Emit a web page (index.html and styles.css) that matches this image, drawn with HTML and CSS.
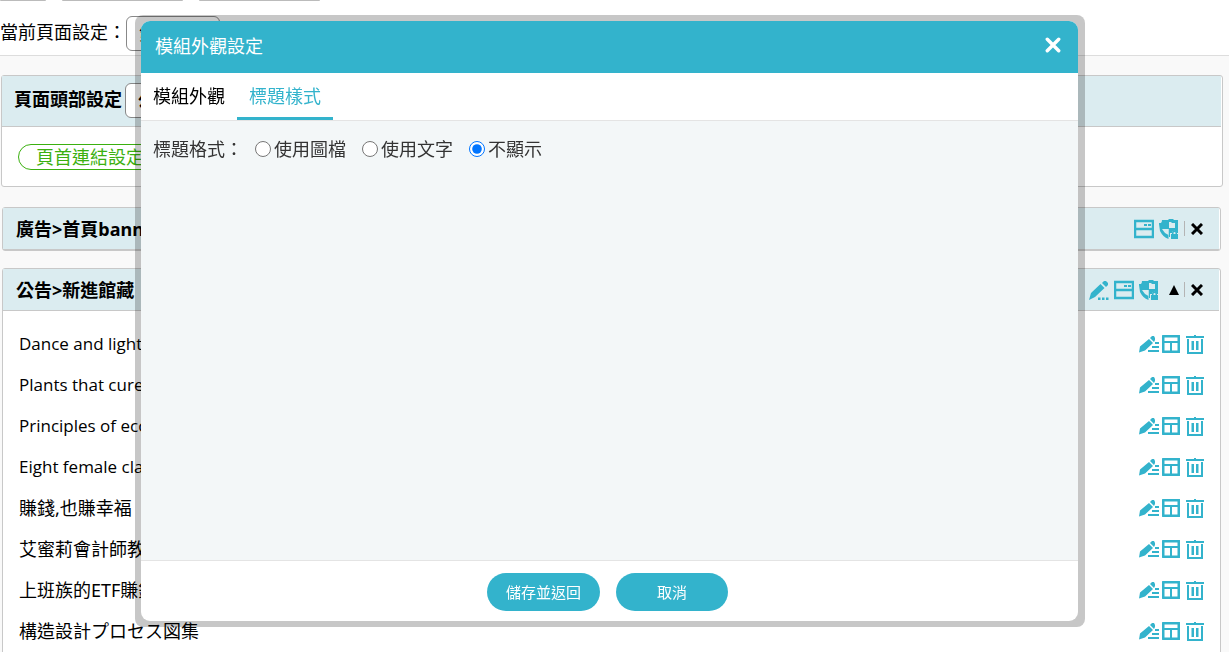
FILE: index.html
```html
<!DOCTYPE html>
<html lang="zh-Hant">
<head>
<meta charset="utf-8">
<title>模組外觀設定</title>
<link rel="stylesheet" href="styles.css">
</head>
<body>
<svg class="sprite" aria-hidden="true">
  <symbol id="i-window" viewBox="0 0 20 20"><path fill="none" stroke="currentColor" stroke-width="2.500" d="M1 2h18v16H1zM1 10h18"/><path fill="currentColor" d="M10 5h3v2h-3zM14 5h3v2h-3z"/></symbol>
  <symbol id="i-shield" viewBox="0 0 20 20"><path fill="currentColor" d="M3 1h6l1-1h4l1 1h4v9h-9.500V20q-3-1-5-3T1 12L0 5V4h2q1-1 1-3z"/><path class="shield-gap" d="M10 3h2l1 1h3v5h-6zM3 10h6.500v6Q5 14 3 10z"/><path fill="currentColor" d="M10 10h9v4h-1q-2-4-5-1v1h-2v4h-1z"/><path fill="currentColor" fill-rule="evenodd" d="M12 15h1v-1a2.500 2.500 0 0 1 5 0v1h1v5h-7zm2.500 0h2v-1a1 1 0 0 0-2 0z"/></symbol>
  <symbol id="i-pen" viewBox="0 0 20 20"><path fill="currentColor" d="M0 20l2-7L11.500 4l4 4L6 17zM13 3l2-2h2l2 2v2l-2 2zM9 17.500h2.500V20H9zM13 17.500h2.500V20H13zM17 17.500h2.500V20H17z"/></symbol>
  <symbol id="i-edit" viewBox="0 0 20 18"><path fill="currentColor" d="M0 17.500l1-6 9-7.500 4 4-8 7.500zM11 3l2-2h2l1 2v2l-1 2zM16 7h4v2h-4zM13 11h7v2h-7zM9 15h11v2H9z"/></symbol>
  <symbol id="i-layout" viewBox="0 0 18 18"><rect x="1" y="1" width="16" height="16" rx="1" fill="none" stroke="currentColor" stroke-width="3"/><path fill="none" stroke="currentColor" stroke-width="2" d="M1 7h16M9 7v10"/></symbol>
  <symbol id="i-trash" viewBox="0 0 18 20"><path fill="currentColor" d="M0 2h8V1h2v1h8v2H0zM1 5h2v13h12V5h2v15H1zM5.500 7H8v9H5.500zM10 7h2.500v9H10z"/></symbol>
</svg>

<div class="page">
  <header class="top">
    <div class="strip"><span class="stub stub-short"></span><span class="stub"></span><span class="stub"></span></div>
    <div class="page-pick"><label class="pick-label" for="pg">當前頁面設定：</label><select id="pg" class="pick"><option>第一頁</option></select></div>
  </header>
  <main class="content">
    <section class="panel panel-wide">
      <div class="head head-tall"><label class="pick-label" for="hd">頁面頭部設定</label><select id="hd" class="pick"><option>公版</option></select></div>
      <div class="links"><a class="pill" href="#">頁首連結設定</a></div>
    </section>
    <section class="panel">
      <div class="head"><h2 class="name">廣告&gt;首頁banner</h2>
        <div class="tools"><button class="tool" aria-label="版面"><svg class="ico"><use href="#i-window"/></svg></button><button class="tool" aria-label="權限"><svg class="ico"><use href="#i-shield"/></svg></button><button class="tool close-x" aria-label="移除"><svg class="cross" viewBox="0 0 12 12"><path d="M1 1l10 10M11 1L1 11"/></svg></button></div>
      </div>
    </section>
    <section class="panel">
      <div class="head"><h2 class="name">公告&gt;新進館藏</h2>
        <div class="tools"><button class="tool" aria-label="編輯"><svg class="ico"><use href="#i-pen"/></svg></button><button class="tool" aria-label="版面"><svg class="ico"><use href="#i-window"/></svg></button><button class="tool" aria-label="權限"><svg class="ico"><use href="#i-shield"/></svg></button><button class="tool up" aria-label="上移"><svg class="tri" viewBox="0 0 10 10"><path d="M5 0l5 10H0z"/></svg></button><button class="tool close-x" aria-label="移除"><svg class="cross" viewBox="0 0 12 12"><path d="M1 1l10 10M11 1L1 11"/></svg></button></div>
      </div>
      <ul class="list" id="list"></ul>
    </section>
  </main>
</div>

<div class="frame" role="dialog" aria-labelledby="dlg">
  <div class="dialog">
    <div class="bar"><h1 class="title" id="dlg">模組外觀設定</h1><button class="close" aria-label="關閉"><svg class="close-mark" viewBox="0 0 14 14"><path d="M2 2l10 10M12 2L2 12"/></svg></button></div>
    <nav class="tabs"><a class="tab" href="#">模組外觀</a><a class="tab tab-on" href="#">標題樣式</a></nav>
    <div class="body">
      <fieldset class="field"><legend class="legend">標題格式：</legend>
        <label class="opt"><input class="radio" type="radio" name="fmt">使用圖檔</label>
        <label class="opt"><input class="radio" type="radio" name="fmt">使用文字</label>
        <label class="opt"><input class="radio" type="radio" name="fmt" checked>不顯示</label>
      </fieldset>
    </div>
    <div class="foot"><button class="btn">儲存並返回</button><button class="btn">取消</button></div>
  </div>
</div>
<script src="list.js"></script>
</body>
</html>
```
FILE: list.js
```js
const titles = [
  "Dance and light", "Plants that cure", "Principles of economics", "Eight female classics",
  "賺錢,也賺幸福", "艾蜜莉會計師教你", "上班族的ETF賺錢術", "構造設計プロセス図集"
];
const icons = [["edit", "編輯"], ["layout", "版面"], ["trash", "刪除"]];
const isLatin = t => /^[\x20-\x7e]+$/.test(t);
document.getElementById("list").innerHTML = titles.map(t =>
  `<li class="row"><span class="${isLatin(t) ? "row-latin" : "row-name"}">${t}</span><span class="acts">${icons.map(([i, l]) =>
    `<button class="tool" aria-label="${l}"><svg class="ico-${i}"><use href="#i-${i}"/></svg></button>`).join("")}</span></li>`
).join("");
```
FILE: styles.css
```css
* { box-sizing: border-box; }
body {
  margin: 0;
  color: #000;
  background: #f9f9f9;
  font: 18px/24px "Noto Sans", "Noto Sans CJK TC", "Noto Sans CJK JP", sans-serif;
}
button, select, input { font: inherit; }
.sprite { position: absolute; width: 0; height: 0; }
.page { height: 100vh; overflow: hidden; }
.top { background: #fff; border-bottom: 1px solid #ddd; }
.strip { display: flex; gap: 16px; height: 1px; }
.stub { width: 121px; background: #bbb; border-radius: 0 0 8px 8px; }
.stub-short { width: 46px; }
.page-pick { display: flex; align-items: center; height: 54px; padding-top: 11px; }
.pick-label { padding-bottom: 3px; }
.pick {
  appearance: none;
  width: 94px;
  height: 35px;
  padding: 0 12px;
  border: 1px solid #888;
  border-radius: 6px;
  background: #fff;
  color: #000;
  font-size: 15px;
}
.content { padding: 19px 8px 0 2px; }
.panel {
  margin-bottom: 17px;
  border: 1px solid #c8c8c8;
  border-radius: 3px;
  background: #fff;
}
.panel-wide { margin: 0 -2px 20px -1px; }
.head {
  display: flex;
  align-items: center;
  height: 42px;
  margin-right: 1px;
  padding: 0 16px 0 13px;
  border-bottom: 1px solid #c8c8c8;
  background: #dbecf0;
  font-weight: 700;
}
.head-tall { height: 51px; gap: 3px; padding: 0 16px 2px 12px; }
.name { margin: 0; font-size: 18px; line-height: 24px; }
.links { padding: 17px 16px 16px; }
.pill {
  display: inline-flex;
  align-items: center;
  height: 26px;
  padding: 0 17px;
  border: 1px solid #3bb010;
  border-radius: 13px;
  color: #3bb010;
  text-decoration: none;
}
.tools { display: flex; align-items: center; gap: 5px; margin-left: auto; }
.tool { display: flex; padding: 0; border: 0; background: none; color: #33b3cc; }
.ico { width: 20px; height: 20px; }
.shield-gap { fill: #dbecf0; }
.up { margin-left: 5px; }
.tri { width: 10px; height: 10px; }
.close-x { height: 15px; align-items: center; padding-left: 6px; border-left: 1px solid #b4b4b4; }
.cross { width: 12px; height: 12px; fill: none; stroke: #000; stroke-width: 3; }
.list { margin: 0; padding: 13px 16px 16px; list-style: none; }
.row { display: flex; align-items: center; height: 41px; padding-bottom: 1px; }
.row-latin { font-family: "Open Sans", sans-serif; font-size: 17px; }
.acts { display: flex; align-items: center; gap: 3px; margin-left: auto; }
.ico-edit { width: 20px; height: 18px; }
.ico-layout { width: 18px; height: 18px; }
.ico-trash { width: 18px; height: 20px; margin-left: 3px; }
.frame {
  position: fixed;
  inset: 15px 144px 25px 135px;
  padding: 6px 7px 6px 6px;
  border-radius: 8px;
  background: rgba(0, 0, 0, 0.22);
}
.dialog {
  display: flex;
  flex-direction: column;
  height: 100%;
  overflow: hidden;
  border-radius: 9px;
  background: #fff;
}
.bar {
  display: flex;
  align-items: center;
  justify-content: space-between;
  height: 52px;
  padding: 0 17px 2px 14px;
  background: #33b3cc;
  color: #fff;
}
.title { margin: 0; font-size: 18px; font-weight: 400; }
.close { display: flex; padding: 0 0 2px; border: 0; background: none; }
.close-mark { width: 16px; height: 16px; fill: none; stroke: #fff; stroke-width: 3; stroke-linecap: round; }
.tabs { display: flex; height: 48px; border-bottom: 1px solid #e4e4e4; }
.tab { padding: 11px 12px 0; color: #000; text-decoration: none; }
.tab-on { border-bottom: 3px solid #33b3cc; color: #33b3cc; }
.body { flex: 1; padding: 16px 12px; background: #f3f7f8; color: #333; }
.field { display: flex; align-items: center; margin: 0; padding: 0; border: 0; }
.legend { float: left; padding: 0; margin-right: 12px; }
.opt { display: flex; align-items: center; margin-right: 16px; }
.radio { width: 16px; height: 16px; margin: 0 3px 0 0; }
.foot {
  display: flex;
  justify-content: center;
  gap: 16px;
  padding: 12px 4px 10px 0;
  border-top: 1px solid #e4e4e4;
}
.btn {
  min-width: 112px;
  height: 38px;
  padding: 0 19px;
  border: 0;
  border-radius: 19px;
  background: #33b3cc;
  color: #fff;
  font-size: 15px;
}
```
